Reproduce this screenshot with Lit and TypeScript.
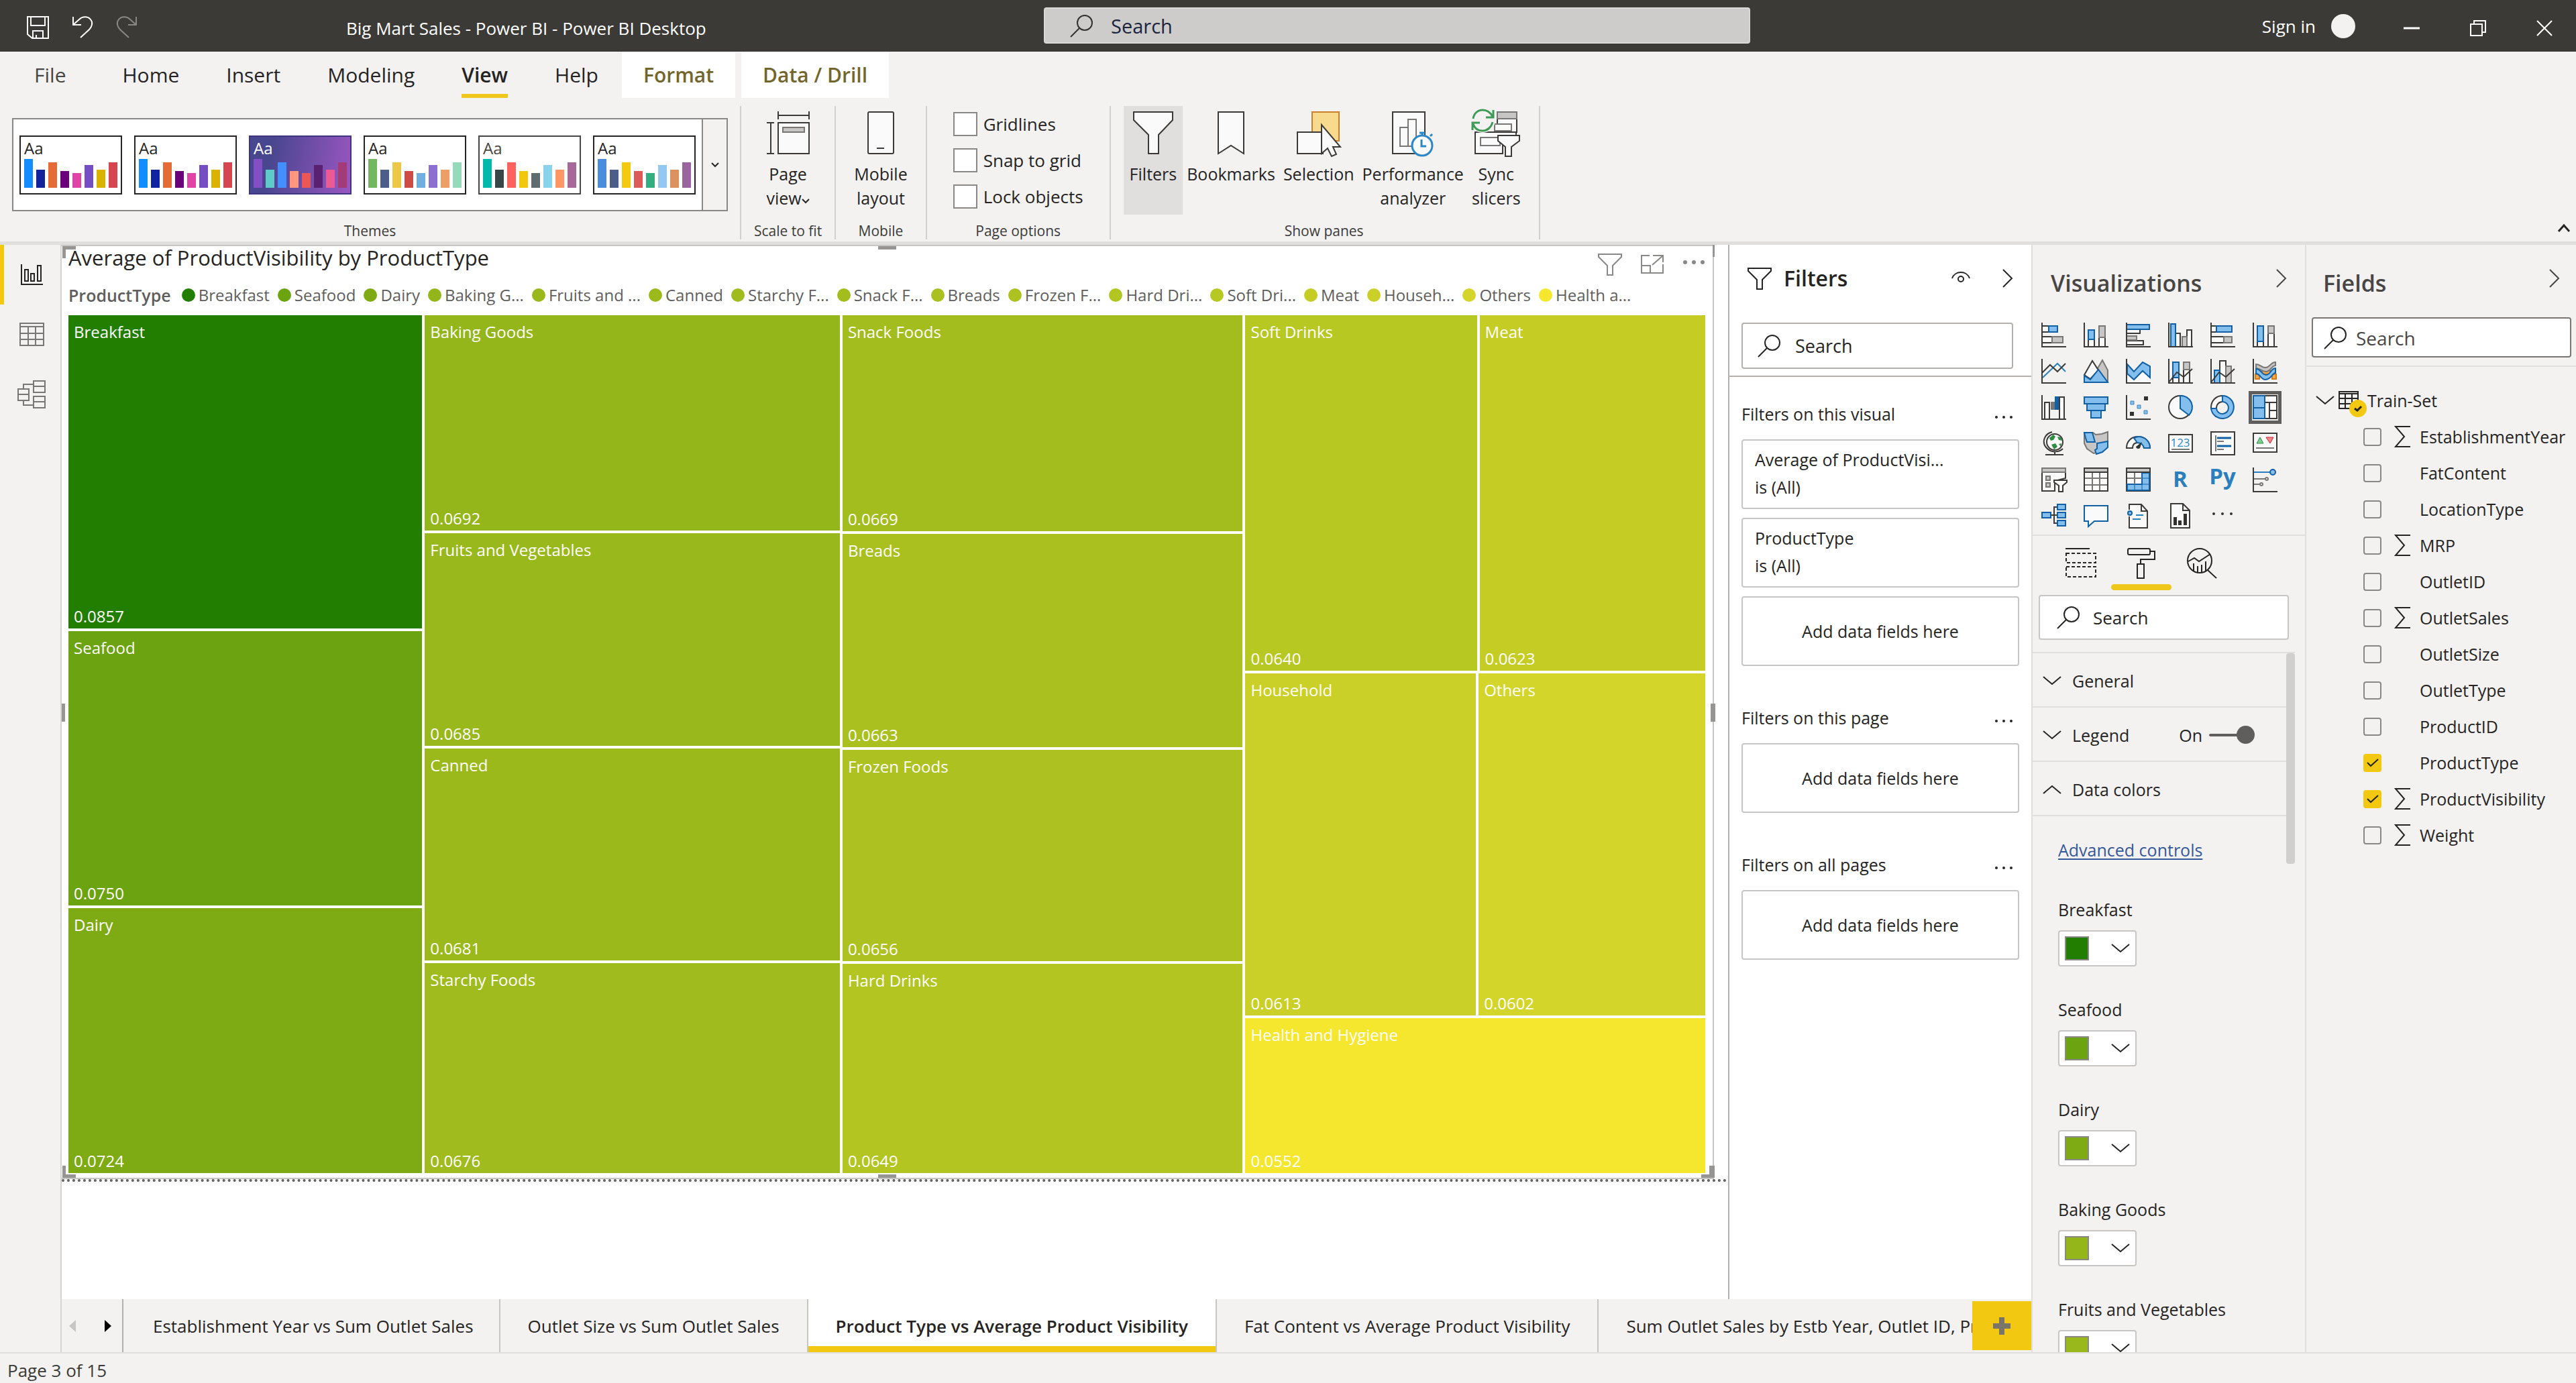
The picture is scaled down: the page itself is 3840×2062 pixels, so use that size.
import { LitElement, html, css, svg, nothing } from "lit";
import { customElement, state } from "lit/decorators.js";
import { classMap } from "lit/directives/class-map.js";
import { styleMap } from "lit/directives/style-map.js";

interface Cell {
  name: string;
  short: string;
  value: number;
  color: string;
}

const cell = (name: string, short: string, value: number, color: string): Cell => ({ name, short, value, color });

/* Treemap data: columns -> rows -> cells; every extent is proportional to the sum of its values. */
const TREEMAP: Cell[][][] = [
  [
    [cell("Breakfast", "Breakfast", 0.0857, "#227e01")],
    [cell("Seafood", "Seafood", 0.075, "#6ca310")],
    [cell("Dairy", "Dairy", 0.0724, "#7eaa13")],
  ],
  [
    [cell("Baking Goods", "Baking G...", 0.0692, "#94b61a")],
    [cell("Fruits and Vegetables", "Fruits and ...", 0.0685, "#99b81b")],
    [cell("Canned", "Canned", 0.0681, "#9cb91c")],
    [cell("Starchy Foods", "Starchy F...", 0.0676, "#a0bb1d")],
  ],
  [
    [cell("Snack Foods", "Snack F...", 0.0669, "#a4bd1e")],
    [cell("Breads", "Breads", 0.0663, "#a9c01f")],
    [cell("Frozen Foods", "Frozen F...", 0.0656, "#adc220")],
    [cell("Hard Drinks", "Hard Dri...", 0.0649, "#b2c521")],
  ],
  [
    [cell("Soft Drinks", "Soft Dri...", 0.064, "#b8c823"), cell("Meat", "Meat", 0.0623, "#c5cd25")],
    [cell("Household", "Househ...", 0.0613, "#cbd028"), cell("Others", "Others", 0.0602, "#d3d52a")],
    [cell("Health and Hygiene", "Health a...", 0.0552, "#f5e62e")],
  ],
];
const CELLS = TREEMAP.flat(2);
const total = (cells: Cell[]) => cells.reduce((sum, c) => sum + c.value, 0);

const BAR_HEIGHTS = [43, 27, 38, 25, 22, 34, 27, 38];
const CLASSIC = ["#118dff", "#12239e", "#e66c37", "#6b007b", "#e044a7", "#744ec2", "#d9b300", "#d64550"];
const THEMES = [
  { name: "Default", tone: "", bars: CLASSIC },
  { name: "Current", tone: "", bars: CLASSIC },
  { name: "Innovate", tone: "dusk", bars: ["#8250c4", "#5ecbc8", "#438fff", "#ff977e", "#eb5757", "#5b2071", "#ec5a96", "#a43b76"] },
  { name: "Bloom", tone: "", bars: ["#74b761", "#4c5d8a", "#ecc846", "#cd4c46", "#71afe2", "#8d6fd1", "#ee9e64", "#95dabb"] },
  { name: "Tidal", tone: "soft", bars: ["#01b8aa", "#374649", "#fd625e", "#f2c80f", "#5f6b6d", "#8ad4eb", "#fe9666", "#a66999"] },
  { name: "Storm", tone: "", bars: ["#4a8ddc", "#4c5d8a", "#f3c911", "#dc5b57", "#33ae81", "#95c8f0", "#dd915f", "#9a64a0"] },
];

const FIELDS = [
  { name: "EstablishmentYear", sum: true, on: false },
  { name: "FatContent", sum: false, on: false },
  { name: "LocationType", sum: false, on: false },
  { name: "MRP", sum: true, on: false },
  { name: "OutletID", sum: false, on: false },
  { name: "OutletSales", sum: true, on: false },
  { name: "OutletSize", sum: false, on: false },
  { name: "OutletType", sum: false, on: false },
  { name: "ProductID", sum: false, on: false },
  { name: "ProductType", sum: false, on: true },
  { name: "ProductVisibility", sum: true, on: true },
  { name: "Weight", sum: true, on: false },
];

const PAGES = [
  "Establishment Year vs Sum Outlet Sales",
  "Outlet Size vs Sum Outlet Sales",
  "Product Type vs Average Product Visibility",
  "Fat Content vs Average Product Visibility",
  "Sum Outlet Sales by Estb Year, Outlet ID, Product Type",
];

const icon = (w: number, h: number, body: unknown, cls = "") =>
  html`<svg class="icon ${cls}" width=${w} height=${h} viewBox="0 0 ${w} ${h}" aria-hidden="true">${body}</svg>`;

const searchIcon = () => icon(34, 34, svg`<circle cx="22" cy="12" r="11"/><path d="M14 20L1 33"/>`, "line");
const chevronRight = () => icon(16, 28, svg`<path d="M1 1L14 14L1 27"/>`, "line");
const chevronDown = () => icon(28, 14, svg`<path d="M1 1L14 12L27 1"/>`, "line");
const chevronUp = () => icon(28, 14, svg`<path d="M1 13L14 2L27 13"/>`, "line");
const funnel = () => icon(36, 33, svg`<path d="M1 1H35V5L22 18V32H14V18L1 5Z"/>`, "line");
const sigma = () => icon(24, 32, svg`<path d="M23 1H1L14 16L1 31H23"/>`, "line");

const AXES = svg`<path class="n" d="M1 0V36H37"/>`;

const VISUALS: { name: string; body: unknown }[] = [
  { name: "Stacked bar chart", body: svg`<path class="w" d="M1 5H11V14H1ZM1 21H16V30H1Z"/><path class="b" d="M11 5H24V14H11Z"/><path class="g" d="M16 21H32V30H16Z"/>${AXES}` },
  { name: "Stacked column chart", body: svg`<path class="w" d="M7 25H16V36H7ZM23 22H32V36H23Z"/><path class="b" d="M7 11H16V25H7Z"/><path class="g" d="M23 5H32V22H23Z"/>${AXES}` },
  { name: "Clustered bar chart", body: svg`<path class="w" d="M1 10H21V16H1ZM1 27H26V33H1Z"/><path class="b" d="M1 3H35V10H1Z"/><path class="g" d="M1 20H16V26H1Z"/>${AXES}` },
  { name: "Clustered column chart", body: svg`<path class="w" d="M11 16H18V36H11ZM28 11H35V36H28Z"/><path class="b" d="M4 2H11V36H4Z"/><path class="g" d="M21 21H28V36H21Z"/>${AXES}` },
  { name: "100% stacked bar chart", body: svg`<path class="w" d="M1 5H9V14H1ZM1 21H20V30H1Z"/><path class="b" d="M9 5H32V14H9Z"/><path class="g" d="M20 21H32V30H20Z"/>${AXES}` },
  { name: "100% stacked column chart", body: svg`<path class="w" d="M7 28H16V36H7ZM23 16H32V36H23Z"/><path class="b" d="M7 5H16V28H7Z"/><path class="g" d="M23 5H32V16H23Z"/>${AXES}` },
  { name: "Line chart", body: svg`<path class="lb" d="M2 28L24 7L36 19"/><path class="n" d="M1 21L13 9L24 19L36 7"/>${AXES}` },
  { name: "Area chart", body: svg`<path class="g" d="M18 19L28 2L36 17V35H30Z"/><path class="w" d="M1 24L13 3L22 17L10 30Z"/><path class="b" d="M1 25L10 31L22 16L36 35H1Z"/>` },
  { name: "Stacked area chart", body: svg`<path class="wf" d="M2 22L12 31L25 18L36 28V35H2Z"/><path class="b" d="M2 8L12 19L25 5L36 11V28L25 18L12 31L2 22Z"/>${AXES}` },
  { name: "Line and stacked column chart", body: svg`<path class="w" d="M7 28H16V36H7ZM23 16H32V36H23Z"/><path class="b" d="M7 5H16V28H7Z"/><path class="g" d="M23 5H32V16H23Z"/><path class="n" d="M1 35L13 20L23 27L36 15"/>${AXES}` },
  { name: "Line and clustered column chart", body: svg`<path class="w" d="M14 3H23V36H14Z"/><path class="b" d="M6 17H14V36H6Z"/><path class="g" d="M23 11H31V36H23Z"/><path class="n" d="M1 35L13 20L23 27L36 15"/>${AXES}` },
  { name: "Ribbon chart", body: svg`<path class="of" d="M4 23H10V30H4ZM14 17H26V23H14ZM29 23H35V30H29Z"/><path class="g" d="M5 8C12 8 13 14 20 13C26 12 27 5 34 5V10C28 10 27 19 20 19C13 19 12 14 5 14Z"/><path class="b" d="M5 15C13 15 13 24 20 24C27 24 27 14 34 14V21C29 21 28 31 19 31C12 31 12 23 5 22Z"/>${AXES}` },
  { name: "Waterfall chart", body: svg`<path class="gd" d="M14 10H20V22H14Z"/><path class="w" d="M5 11H12V36H5ZM27 3H34V36H27Z"/><path class="sf" d="M20 2H26V22H20Z"/>${AXES}` },
  { name: "Funnel chart", body: svg`<path class="b" d="M1 3H36V13H1ZM5 13H32V23H5ZM11 23H26V34H11Z"/>` },
  { name: "Scatter chart", body: svg`<path class="df" d="M27 2H33V8H27ZM6 25H12V31H6Z"/><path class="bt" d="M7 9H12V14H7ZM17 15H22V20H17ZM27 23H32V28H27Z"/>${AXES}` },
  { name: "Pie chart", body: svg`<circle class="w" cx="18" cy="18" r="17"/><path class="b" d="M18 1A17 17 0 0 1 31 30L18 20Z"/>` },
  { name: "Donut chart", body: svg`<path class="w" d="M18 1A17 17 0 0 0 1 18V20H9A9 9 0 0 1 18 10Z"/><path class="b" d="M18 1A17 17 0 1 1 1 20H9A9 9 0 1 0 18 10Z"/>` },
  { name: "Treemap", body: svg`<path class="w" d="M18 1H36V35H18ZM18 11H36M25 11V35M25 23H36"/><path class="b" d="M1 1H18V19H1ZM1 19H18V35H1Z"/>` },
  { name: "Map", body: svg`<circle class="w" cx="20" cy="16" r="12"/><path class="gr" d="M12 10L18 5L21 8L18 13L14 14ZM24 8L29 9L31 14L26 13ZM15 20L21 18L24 23L19 27ZM26 19L30 18L29 23Z"/><path class="n" d="M16 1C4 4 0 17 8 25C15 33 27 31 32 26M20 31V35M6 35H33"/>` },
  { name: "Filled map", body: svg`<path class="g" d="M1 2H14L18 5L27 4L36 1V20L30 24L25 30L15 33L5 26L1 18Z"/><path class="b" d="M1 2H13L17 16H5L3 10Z"/><path class="b" d="M20 18L36 15V24L28 31L19 34L17 28L20 26Z"/>` },
  { name: "Gauge", body: svg`<path class="w" d="M1 25C1 15 8 8 18 8C28 8 36 15 36 25H27C27 20 23 17 18 17C13 17 10 20 10 25Z"/><path class="b" d="M12 10C24 4 36 13 36 25H27C26 20 22 17 17 17Z"/><path class="df" d="M15 23L24 16L21 25C19 27 15 26 15 23Z"/>` },
  { name: "Card", body: svg`<path class="w" d="M1 5H36V31H1Z"/><text class="num" x="18" y="23">123</text><path class="lg" d="M5 27H32"/>` },
  { name: "Multi-row card", body: svg`<path class="w" d="M1 1H36V35H1Z"/><path class="lg" d="M8 6V30M10 15H20M10 27H20"/><path class="lB" d="M10 10H31M10 22H31"/>` },
  { name: "KPI", body: svg`<path class="w" d="M1 3H36V31H1Z"/><path class="up" d="M11 9L16 18H6Z"/><path class="dn" d="M20 9H31L26 18Z"/><path class="lg" d="M5 25H32"/>` },
  { name: "Slicer", body: svg`<path class="w" d="M1 1H36V16L20 20V35H1Z"/><path class="g" d="M1 1H36V7H1Z"/><path class="g" d="M7 13H13V19H7ZM7 23H13V29H7Z"/><path class="w" d="M19 19H38V22L32 27V36H26V27L19 22Z"/>` },
  { name: "Table", body: svg`<path class="w" d="M1 1H36V35H1Z"/><path class="lg" d="M2 16H35M2 26H35M13 8V34M24 8V34"/><path class="gk" d="M1 1H36V7H1Z"/>` },
  { name: "Matrix", body: svg`<path class="w" d="M1 1H36V35H1Z"/><path class="b" d="M24 8H35V34H2V25H24Z"/><path class="lg" d="M2 16H24M13 8V25"/><path class="lbs" d="M24 16H35M24 25V34M13 25V34M24 25H35"/><path class="gk" d="M1 1H36V7H1Z"/>` },
  { name: "R script visual", body: svg`<text class="letters" x="18" y="29">R</text>` },
  { name: "Python visual", body: svg`<text class="letters" x="18" y="25">Py</text>` },
  { name: "Key influencers", body: svg`<path class="lb" d="M1 7H26"/><circle class="b" cx="30" cy="7" r="4"/><path class="lg" d="M1 17H19M1 25H11"/><circle class="gc" cx="21" cy="17" r="2"/><circle class="gc" cx="13" cy="25" r="2"/>${AXES}` },
  { name: "Decomposition tree", body: svg`<path class="n" d="M14 17H24M24 5H19V29H24"/><path class="b" d="M1 13H14V21H1ZM24 1H36V9H24ZM24 13H36V21H24ZM24 25H36V33H24Z"/>` },
  { name: "Q and A", body: svg`<path class="bw" d="M1 3H36V26H16L7 34V26H1Z"/>` },
  { name: "Smart narrative", body: svg`<path class="wf" d="M5 1H23L32 11V36H5Z"/><path class="n" d="M5 9V1H23L32 11V36H5V19M23 1V11H32"/><circle class="b" cx="6" cy="14" r="3"/><path class="lb" d="M15 17H26M10 23H22"/>` },
  { name: "Paginated report", body: svg`<path class="w" d="M4 0H22L32 10V36H4ZM22 0V10H32"/><path class="df" d="M8 20H13V32H8ZM15 25H20V32H15ZM23 15H28V32H23Z"/>` },
  { name: "More visuals", body: svg`<circle class="df" cx="5" cy="15" r="2"/><circle class="df" cx="18" cy="15" r="2"/><circle class="df" cx="31" cy="15" r="2"/>` },
];

@customElement("app-root")
export class AppRoot extends LitElement {
  @state() private page = 2;
  @state() private visual = 17;

  static styles = css`
    :host {
      --ink: #252423;
      --soft: #605e5c;
      --bar: #3b3a37;
      --surface: #f3f2f1;
      --edge: #e1dfdd;
      --line: #c8c6c4;
      --accent: #f2c811;
      display: grid;
      grid-template-rows: 77px auto minmax(0, 1fr) 46px;
      height: 100vh;
      overflow: hidden;
      background: var(--surface);
      color: var(--ink);
      font: 25px/34px "Open Sans", "Noto Sans", sans-serif;
    }
    *, *::before, *::after { box-sizing: border-box; }
    button, input { font: inherit; color: inherit; }
    button {
      margin: 0;
      padding: 0;
      border: 0;
      background: none;
      display: flex;
      align-items: center;
      justify-content: center;
      flex: none;
    }
    h2, h3, p, ul { margin: 0; padding: 0; font-weight: inherit; font-size: inherit; }
    ul { list-style: none; }
    .icon { display: block; flex: none; overflow: visible; }
    .line { fill: none; stroke: currentColor; stroke-width: 2; }

    /* Title bar */
    .titlebar {
      display: grid;
      grid-template-columns: 1556fr 1053fr 1231fr;
      background: var(--bar);
      color: #fff;
      font-size: 26px;
    }
    .quick { display: flex; align-items: center; padding: 4px 0 0 40px; gap: 34px; }
    .quick .dim { color: #8a8886; }
    .doc { margin-left: 277px; padding-top: 2px; white-space: nowrap; }
    .search {
      display: flex;
      align-items: center;
      border: 2px solid var(--line);
      border-radius: 4px;
      background: #fff;
      gap: 22px;
    }
    .search input {
      flex: 1;
      min-width: 0;
      padding: 0;
      border: 0;
      outline: 0;
      background: none;
      font-size: 27px;
      line-height: 40px;
    }
    .search input::placeholder { color: inherit; opacity: 1; }
    .search.top {
      margin: 11px 0 12px;
      padding: 2px 0 0 37px;
      gap: 27px;
      background: #cdccca;
      border-color: #dad8d6;
      color: #1b2440;
    }
    .search.top .icon { color: #33322f; }
    .search.top input { font-size: 29px; }
    .window { display: flex; align-items: center; justify-content: flex-end; padding-right: 35px; }
    .window .avatar { width: 36px; height: 36px; margin: 0 72px 0 23px; border-radius: 50%; background: var(--surface); }
    .window button + button { margin-left: 75px; }
    .window button .icon { margin-top: 6px; }

    /* Ribbon */
    .ribbon { border-bottom: 5px solid #e0dfde; }
    .tabs { display: flex; height: 69px; padding-left: 16px; font-size: 30px; }
    .tab { padding: 0 35px; position: relative; }
    .tab.file { color: #484644; margin-right: 14px; }
    .tab.on { font-weight: 600; }
    .tab.on::after {
      content: "";
      position: absolute;
      left: 35px;
      right: 35px;
      bottom: 0;
      height: 6px;
      background: #efc71b;
    }
    .tab.context { background: #fff; color: #73662c; font-weight: 600; padding: 0 32px; }
    .tab.context + .tab.context { margin-left: 9px; }
    .groups { display: flex; padding: 12px 0 3px; height: 214px; }
    .group {
      display: flex;
      flex-direction: column;
      justify-content: space-between;
      align-items: center;
      border-right: 2px solid #d2d0ce;
    }
    .group > .label { font-size: 21px; line-height: 26px; color: #3b3a39; }
    .themes { padding: 0 18px; }
    .scale { padding: 0 19px; }
    .mobile { padding: 0 21px; }
    .options { padding: 0 39px; }
    .show { padding: 0 21px 0 19px; }
    .gallery {
      display: flex;
      margin-top: 18px;
      height: 139px;
      border: 2px solid #8a8886;
      background: #fff;
    }
    .thumbs { display: flex; align-items: center; gap: 18px; padding: 0 9px; }
    .thumb {
      flex-direction: column;
      align-items: flex-start;
      justify-content: space-between;
      width: 153px;
      height: 88px;
      padding: 4px 6px 8px 5px;
      border: 2px solid #252423;
      background: #fff;
      font-size: 24px;
      line-height: 26px;
    }
    .thumb.soft { border-color: #484644; color: #484644; }
    .thumb.dusk { border-color: #3d3580; color: #fff; background: linear-gradient(100deg, #48468f 20%, #9a56c1); }
    .bars { display: flex; align-items: flex-end; gap: 5px; height: 43px; }
    .bars i { width: 13px; }
    .more { width: 37px; border-left: 2px solid #8a8886; background: var(--surface); }
    .big {
      flex-direction: column;
      justify-content: flex-start;
      height: 162px;
      padding: 8px 6px 0;
      line-height: 36px;
    }
    .big .cap { margin-top: 11px; }
    .big.pressed { background: var(--edge); padding: 8px 9px 0; }
    .row { display: flex; }
    .icon.tiny { display: inline-block; }
    .rb .w { fill: #fafafa; stroke: #3b3a39; stroke-width: 2; }
    .rb .n { fill: none; stroke: #3b3a39; stroke-width: 2; }
    .rb .g { fill: #c8c6c4; stroke: #797775; stroke-width: 2; }
    .rb .gw { fill: #fafafa; stroke: #797775; stroke-width: 2; }
    .rb .o { fill: #f8da8f; stroke: #c8802b; stroke-width: 2; }
    .rb .bl { fill: #fafafa; stroke: #2b88c8; stroke-width: 3; }
    .rb .gn { fill: none; stroke: #3f9a57; stroke-width: 3; }
    .checks { display: flex; flex-direction: column; gap: 18px; padding-top: 9px; font-size: 26px; }
    .checks label { display: flex; align-items: center; gap: 9px; height: 36px; }
    .checks input { appearance: none; margin: 0; width: 36px; height: 36px; border: 2px solid #8a8886; background: #fff; }
    .collapse { margin: auto 8px 11px auto; }
    .bold { stroke-width: 3; }

    /* Workspace */
    .workspace { display: grid; grid-template-columns: 92px minmax(0, 1fr) 408px 404px; min-height: 0; }
    .rail { border-right: 2px solid #d6d4d2; color: #797775; }
    .rail button { width: 90px; height: 89px; padding-left: 2px; border-left: 6px solid transparent; padding-right: 4px; }
    .rail button.on { border-color: var(--accent); color: var(--ink); }
    .main { display: grid; grid-template-rows: minmax(0, 1fr) 79px; min-height: 0; }
    .stage { display: grid; grid-template-columns: minmax(0, 1fr) 452px; background: #fff; min-height: 0; }
    .page { aspect-ratio: 16 / 9; border-bottom: 4px dotted #605e5c; display: flex; }
    .visual {
      position: relative;
      display: flex;
      flex-direction: column;
      flex: 1;
      min-width: 0;
      margin-right: 21px;
      padding: 0 11px 7px 10px;
      border: 2px solid var(--line);
      border-left: 0;
    }
    .visual-top { display: flex; justify-content: space-between; height: 54px; }
    .visual h2 { font-size: 31px; line-height: 34px; }
    .tools { display: flex; align-items: center; gap: 28px; color: #8a8886; }
    .tools .dots { fill: currentColor; }
    .legend { display: flex; align-items: center; gap: 16px; height: 38px; margin-bottom: 11px; font-size: 24px; color: var(--soft); white-space: nowrap; }
    .legend b { font-size: 25px; font-weight: 600; }
    .legend li { display: flex; align-items: center; gap: 5px; }
    .legend ul { display: flex; gap: 12px; }
    .dot { width: 20px; height: 20px; border-radius: 50%; }
    .treemap { display: flex; flex: 1; gap: 4px; min-height: 0; color: #fff; font-size: 24px; line-height: 32px; }
    .treemap .col { display: flex; flex-direction: column; gap: 4px; flex-basis: 0; min-width: 0; }
    .treemap .band { display: flex; gap: 4px; flex-basis: 0; min-height: 0; }
    .treemap .cell { display: flex; flex-direction: column; justify-content: space-between; flex-basis: 0; min-width: 0; padding: 9px 8px 2px; }
    .grip { position: absolute; background: #979593; }
    .grip.t { top: 0; left: calc(50% - 14px); width: 27px; height: 5px; }
    .grip.b { bottom: 0; left: calc(50% - 14px); width: 27px; height: 5px; }
    .grip.l { left: 0; top: calc(50% - 13px); width: 5px; height: 27px; }
    .grip.r { right: -4px; top: calc(50% - 13px); width: 7px; height: 27px; }
    .corner { position: absolute; width: 20px; height: 18px; border: 0 solid #979593; }
    .corner.tl { left: 1px; top: 0; border-width: 5px 0 0 5px; }
    .corner.tr { right: -3px; top: -2px; border-width: 0 3px 0 0; }
    .corner.bl { left: 1px; bottom: 0; border-width: 0 0 5px 5px; }
    .corner.br { right: -3px; bottom: 0; border-width: 0 8px 5px 0; }

    /* Filters pane */
    .filters { border-left: 2px solid #b3b0ad; padding-top: 25px; background: #fff; min-width: 0; }
    .pane-head { display: flex; align-items: center; height: 50px; font-size: 34px; font-weight: 600; }
    .filters .pane-head { padding: 0 27px 0 27px; }
    .filters .pane-head h2 { margin-left: 18px; margin-right: auto; font-size: 32px; }
    .filters .pane-head .eye { margin-right: 48px; }
    .filters .search { margin: 41px 27px 10px 18px; height: 69px; padding-left: 22px; border-color: #b3b0ad; }
    .filter-body { border-top: 2px solid #b3b0ad; padding: 38px 18px 0; }
    .filter-section { display: flex; flex-direction: column; gap: 13px; margin-bottom: 60px; }
    .filter-section h3 { display: flex; justify-content: space-between; align-items: center; margin-bottom: 8px; }
    .filter-section h3 button { padding: 10px 10px 0 0; }
    .card {
      height: 104px;
      padding: 8px 18px;
      border: 2px solid var(--line);
      border-radius: 4px;
      line-height: 41px;
    }
    .card.drop { display: flex; align-items: center; justify-content: center; }

    /* Page tabs */
    .pages { display: flex; min-width: 0; background: var(--surface); font-size: 26px; }
    .pager { display: flex; align-items: center; gap: 41px; padding: 0 15px 0 10px; border-right: 2px solid #b3b0ad; }
    .pager .off { fill: #c8c6c4; }
    .page-tabs { display: flex; flex: 1; min-width: 0; overflow: hidden; }
    .page-tab { padding: 0 41px; border-right: 2px solid var(--line); white-space: nowrap; }
    .page-tab:first-child { padding: 0 38px 0 44px; }
    .page-tab.on { background: #fff; font-weight: 600; box-shadow: inset 0 -9px var(--accent); }
    .add { width: 88px; margin: 3px 0; background: var(--accent); }
    .add path { fill: #7a7566; }

    /* Visualizations pane */
    .viz, .fields { border-left: 2px solid var(--edge); padding-top: 32px; min-width: 0; min-height: 0; color: #252423; }
    .viz { display: flex; flex-direction: column; position: relative; }
    .viz .pane-head, .fields .pane-head { justify-content: space-between; align-items: flex-start; color: #484644; padding: 0 27px 0 27px; line-height: 50px; }
    .fields .pane-head { padding: 0 24px 0 25px; }
    .viz .pane-head button, .fields .pane-head button { margin-top: 4px; }
    .visuals { display: grid; grid-template-columns: repeat(6, 37px); gap: 17px 26px; padding: 34px 0 9px 13px; border-bottom: 2px solid var(--edge); }
    .visuals button { width: 37px; height: 37px; }
    .visuals button.on { outline: 5px solid #605e5c; outline-offset: 1px; }
    .visuals .w { fill: #fafafa; stroke: #3b3a39; stroke-width: 2; }
    .visuals .wf { fill: #fafafa; }
    .visuals .n { fill: none; stroke: #3b3a39; stroke-width: 2; }
    .visuals .b { fill: #83beec; stroke: #1160a5; stroke-width: 2; }
    .visuals .bt { fill: #83beec; stroke: #3a86c4; }
    .visuals .bw { fill: #fafafa; stroke: #1160a5; stroke-width: 2; }
    .visuals .g { fill: #c8c6c4; stroke: #797775; stroke-width: 2; }
    .visuals .gk { fill: #c8c6c4; stroke: #3b3a39; stroke-width: 2; }
    .visuals .gd { fill: #797775; }
    .visuals .gc { fill: #fafafa; stroke: #797775; stroke-width: 2; }
    .visuals .df { fill: #33322f; }
    .visuals .sf { fill: #1160a5; }
    .visuals .of { fill: #f3a64c; stroke: #d67a16; stroke-width: 2; }
    .visuals .gr { fill: #2a8f43; }
    .visuals .lb { fill: none; stroke: #2b7fbd; stroke-width: 2; }
    .visuals .lbs { fill: none; stroke: #1160a5; stroke-width: 1; }
    .visuals .lB { fill: none; stroke: #1160a5; stroke-width: 3; }
    .visuals .lg { fill: none; stroke: #797775; stroke-width: 2; }
    .visuals .up { fill: #7fcf92; stroke: #2a8f43; stroke-width: 1; }
    .visuals .dn { fill: #f7868a; stroke: #c4262e; stroke-width: 1; }
    .visuals .num { fill: #2b88c8; font-size: 17px; text-anchor: middle; }
    .visuals .letters { fill: #2b7fbd; font-size: 33px; font-weight: 700; text-anchor: middle; }
    .modes { display: flex; padding: 18px 0 0 27px; }
    .modes button { width: 90px; height: 63px; align-items: flex-start; border-radius: 4px; position: relative; }
    .modes button.on::after { content: ""; position: absolute; inset: auto 0 0; height: 9px; border-radius: 5px; background: #efc71b; }
    .viz .search { flex: none; margin: 7px 24px 18px 9px; height: 67px; padding-left: 25px; gap: 20px; }
    .viz .search input { font-size: 26px; }
    .format { flex: 1; min-height: 0; margin-right: 15px; overflow: hidden; position: relative; }
    .format .section { display: flex; align-items: center; height: 81px; border-top: 2px solid var(--edge); padding: 2px 60px 0 15px; }
    .format .section button { gap: 16px; }
    .switch { display: flex; align-items: center; gap: 10px; margin-left: auto; }
    .switch input { appearance: none; position: relative; margin: 0; width: 68px; height: 27px; }
    .switch input::before { content: ""; position: absolute; left: 0; right: 20px; top: 12px; height: 4px; background: var(--soft); border-radius: 2px; }
    .switch input::after { content: ""; position: absolute; right: 0; top: 0; width: 27px; height: 27px; border-radius: 50%; background: var(--soft); }
    .colors { border-top: 2px solid var(--edge); padding: 33px 0 0 38px; }
    .colors a { color: #35589a; text-underline-offset: 3px; text-decoration-thickness: 2px; }
    .color-list { margin-top: 55px; display: flex; flex-direction: column; gap: 47px; }
    .color-list li { display: flex; flex-direction: column; gap: 14px; }
    .swatch { width: 117px; height: 54px; padding: 0 8px; justify-content: space-between; align-items: center; background: #fff; border: 2px solid var(--line); border-radius: 4px; }
    .swatch i { width: 36px; height: 36px; border: 2px solid #8a8886; }
    .thumb-bar { position: absolute; right: 0; top: 2px; width: 13px; height: 314px; border-radius: 4px; background: #d0cfcd; }

    /* Fields pane */
    .fields .search { margin: 26px 7px 12px 8px; height: 60px; padding: 2px 0 0 16px; gap: 14px; border-color: #797775; color: #484644; }
    .fields .search input { font-size: 28px; }
    .fields .search .icon { color: var(--ink); }
    .tree { border-top: 2px solid var(--edge); padding-top: 23px; }
    .table-row { display: flex; align-items: center; height: 54px; padding-left: 14px; width: 100%; justify-content: flex-start; }
    .table-row .icon.tbl { margin: 0 0 0 5px; }
    .table-row span { margin-left: 1px; }
    .field { display: flex; align-items: center; height: 54px; padding-left: 85px; }
    .box { display: grid; }
    .box > * { grid-area: 1 / 1; }
    .box input { appearance: none; margin: 0; width: 27px; height: 27px; border: 2px solid #8a8886; border-radius: 4px; }
    .box input:checked { border-color: var(--accent); background: var(--accent); }
    .box .icon { pointer-events: none; place-self: center; }
    .sum { width: 24px; margin: 0 13px 0 20px; }

    .status { display: flex; align-items: center; padding: 6px 0 0 11px; border-top: 2px solid var(--edge); color: #3b3a39; font-size: 26px; }
  `;

  private titleBar() {
    return html`
      <header class="titlebar">
        <div class="quick">
          <button aria-label="Save">${icon(33, 34, svg`<path d="M1 1H32V33H8L1 27V1ZM6 1V14H27V1M9 33V22H24V33M14 33V28"/>`, "line")}</button>
          <button aria-label="Undo">${icon(32, 33, svg`<path d="M2 1V13H14M2 13L11 5C16 0 24 0 28 5C32 10 30 16 26 20L13 32"/>`, "line")}</button>
          <button class="dim" aria-label="Redo">${icon(32, 33, svg`<path d="M30 1V13H18M30 13L21 5C16 0 8 0 4 5C0 10 2 16 6 20L19 32"/>`, "line")}</button>
          <span class="doc">Big Mart Sales - Power BI - Power BI Desktop</span>
        </div>
        <label class="search top">${searchIcon()}<input type="text" placeholder="Search" aria-label="Search" /></label>
        <div class="window">
          <button>Sign in</button>
          <span class="avatar"></span>
          <button aria-label="Minimize">${icon(24, 24, svg`<path d="M0 12H24"/>`, "line bold")}</button>
          <button aria-label="Restore">${icon(24, 24, svg`<path d="M1 6H18V23H1ZM6 6V1H23V18H18"/>`, "line")}</button>
          <button aria-label="Close">${icon(24, 24, svg`<path d="M1 1L23 23M23 1L1 23"/>`, "line")}</button>
        </div>
      </header>`;
  }

  private ribbon() {
    return html`
      <section class="ribbon">
        <nav class="tabs">
          <button class="tab file">File</button>
          <button class="tab">Home</button>
          <button class="tab">Insert</button>
          <button class="tab">Modeling</button>
          <button class="tab on">View</button>
          <button class="tab">Help</button>
          <button class="tab context">Format</button>
          <button class="tab context">Data / Drill</button>
        </nav>
        <div class="groups">
          <div class="group themes">
            <div class="gallery">
              <div class="thumbs">
                ${THEMES.map(
                  (t) => html`<button class="thumb ${t.tone}" aria-label="${t.name} theme">
                    <span>Aa</span>
                    <span class="bars">${t.bars.map((c, i) => html`<i style=${styleMap({ background: c, height: `${BAR_HEIGHTS[i]}px` })}></i>`)}</span>
                  </button>`,
                )}
              </div>
              <button class="more" aria-label="More themes">${icon(12, 8, svg`<path d="M1 1L6 6L11 1"/>`, "line")}</button>
            </div>
            <span class="label">Themes</span>
          </div>
          <div class="group scale">
            <button class="big">
              ${icon(64, 64, svg`<path class="n" d="M17 0V12M63 0V12M17 6H63M0 17H11M0 63H11M6 17V63"/><path class="w" d="M17 17H63V63H17Z"/><path class="g" d="M24 24H56V31H24Z"/>`, "rb")}
              <span class="cap">Page<br />view${icon(12, 10, svg`<path d="M1 2L6 7L11 2"/>`, "line tiny")}</span>
            </button>
            <span class="label">Scale to fit</span>
          </div>
          <div class="group mobile">
            <button class="big">
              ${icon(40, 64, svg`<rect class="w" x="1" y="1" width="38" height="62" rx="2"/><path class="n" d="M14 55H25"/>`, "rb")}
              <span class="cap">Mobile<br />layout</span>
            </button>
            <span class="label">Mobile</span>
          </div>
          <div class="group options">
            <div class="checks">
              <label><input type="checkbox" />Gridlines</label>
              <label><input type="checkbox" />Snap to grid</label>
              <label><input type="checkbox" />Lock objects</label>
            </div>
            <span class="label">Page options</span>
          </div>
          <div class="group show">
            <div class="row">
              <button class="big pressed">
                ${icon(60, 64, svg`<path class="w" d="M1 1H59V13L38 35V63H23V35L1 13Z"/>`, "rb")}
                <span class="cap">Filters</span>
              </button>
              <button class="big">
                ${icon(40, 64, svg`<path class="w" d="M1 1H39V63L20 51L1 63Z"/>`, "rb")}
                <span class="cap">Bookmarks</span>
              </button>
              <button class="big">
                ${icon(66, 64, svg`<path class="o" d="M23 1H63V44H23Z"/><path class="w" d="M1 31H39V63H1Z"/><path class="w" d="M37 20V63L46 55L52 67L59 64L54 53H65Z"/>`, "rb")}
                <span class="cap">Selection</span>
              </button>
              <button class="big">
                ${icon(62, 64, svg`<path class="w" d="M1 1H49V63H1Z"/><path class="gw" d="M12 24H24V52H12ZM24 12H36V52H24Z"/><circle class="bl" cx="45" cy="51" r="15"/><path class="bl" d="M45 36V32M41 32H49M57 37L60 34M44 42V52H51"/>`, "rb")}
                <span class="cap">Performance<br />analyzer</span>
              </button>
              <button class="big">
                ${icon(
                  72,
                  64,
                  svg`<path class="w" d="M38 1H67V31H38Z"/><path class="g" d="M38 1H67V11H38Z"/><path class="gw" d="M34 19H59V29H34Z"/><path class="w" d="M5 31H66V36H46V63H5Z"/><path class="gw" d="M13 39H42V51H13Z"/><path class="w" d="M39 36H71V44L59 53V67H50V53L39 44Z"/><circle cx="16" cy="13" r="19" fill="#f3f2f1"/><path class="gn" d="M2 11C3 3 9 -2 16 -2C23 -2 28 2 31 8M32 -2V9H21M31 16C29 24 23 29 16 29C9 29 4 25 2 19M1 28V17H12"/>`,
                  "rb",
                )}
                <span class="cap">Sync<br />slicers</span>
              </button>
            </div>
            <span class="label">Show panes</span>
          </div>
          <button class="collapse" aria-label="Collapse ribbon">${icon(20, 12, svg`<path d="M2 11L10 2L18 11"/>`, "line bold")}</button>
        </div>
      </section>`;
  }

  private chart() {
    return html`
      <div class="page">
        <article class="visual">
          <div class="visual-top">
            <h2>Average of ProductVisibility by ProductType</h2>
            <div class="tools">
              <button aria-label="Filters on visual">${funnel()}</button>
              <button aria-label="Focus mode">${icon(34, 28, svg`<path d="M13 1H1V27H33V14M1 16H14V27M18 1H33V11M33 1L17 15"/>`, "line")}</button>
              <button aria-label="More options">${icon(34, 8, svg`<circle cx="4" cy="1" r="3"/><circle cx="17" cy="1" r="3"/><circle cx="30" cy="1" r="3"/>`, "dots")}</button>
            </div>
          </div>
          <div class="legend">
            <b>ProductType</b>
            <ul>
              ${CELLS.map((c) => html`<li><i class="dot" style=${styleMap({ background: c.color })}></i>${c.short}</li>`)}
            </ul>
          </div>
          <div class="treemap">
            ${TREEMAP.map(
              (col) => html`<div class="col" style=${styleMap({ flexGrow: String(total(col.flat()) * 1000) })}>
                ${col.map(
                  (band) => html`<div class="band" style=${styleMap({ flexGrow: String(total(band) * 1000) })}>
                    ${band.map(
                      (c) => html`<div class="cell" style=${styleMap({ flexGrow: String(c.value * 1000), background: c.color })}>
                        <span>${c.name}</span><span>${c.value.toFixed(4)}</span>
                      </div>`,
                    )}
                  </div>`,
                )}
              </div>`,
            )}
          </div>
          <i class="grip t"></i><i class="grip b"></i><i class="grip l"></i><i class="grip r"></i>
          <i class="corner tl"></i><i class="corner tr"></i><i class="corner bl"></i><i class="corner br"></i>
        </article>
      </div>`;
  }

  private filterSection(title: string, cards: string[]) {
    return html`<section class="filter-section">
      <h3>${title}<button aria-label="More options">${icon(26, 6, svg`<circle cx="2" cy="3" r="2" fill="#252423"/><circle cx="13" cy="3" r="2" fill="#252423"/><circle cx="24" cy="3" r="2" fill="#252423"/>`)}</button></h3>
      ${cards.map((c) => html`<div class="card"><p>${c}</p><p>is (All)</p></div>`)}
      <div class="card drop">Add data fields here</div>
    </section>`;
  }

  private filtersPane() {
    return html`
      <aside class="filters">
        <div class="pane-head">
          ${funnel()}
          <h2>Filters</h2>
          <button class="eye" aria-label="Show filters">${icon(28, 20, svg`<path d="M1 10C5 -2 23 -2 27 10"/><circle cx="14" cy="11" r="4"/>`, "line")}</button>
          <button aria-label="Collapse filters">${chevronRight()}</button>
        </div>
        <label class="search">${searchIcon()}<input type="text" placeholder="Search" aria-label="Search filters" /></label>
        <div class="filter-body">
          ${this.filterSection("Filters on this visual", ["Average of ProductVisi...", "ProductType"])}
          ${this.filterSection("Filters on this page", [])}
          ${this.filterSection("Filters on all pages", [])}
        </div>
      </aside>`;
  }

  private vizPane() {
    return html`
      <aside class="viz">
        <div class="pane-head"><h2>Visualizations</h2><button aria-label="Collapse visualizations">${chevronRight()}</button></div>
        <div class="visuals">
          ${VISUALS.map(
            (v, i) => html`<button class=${classMap({ on: i === this.visual })} aria-label=${v.name} @click=${() => (this.visual = i)}>
              ${icon(37, 37, v.body)}
            </button>`,
          )}
        </div>
        <div class="modes">
          <button aria-label="Fields">${icon(46, 45, svg`<path d="M0 1H36"/><path stroke-dasharray="5 3" d="M1 8H45V22H1ZM1 28H45V43H1Z"/>`, "line")}</button>
          <button class="on" aria-label="Format">${icon(42, 46, svg`<rect x="1" y="1" width="33" height="9" rx="2"/><path d="M34 5H41V17H20V24M15 24H25V45H15Z"/>`, "line")}</button>
          <button aria-label="Analytics">${icon(46, 46, svg`<circle cx="20" cy="19" r="18"/><path d="M3 20L12 15L19 20L36 9M11 23V34M17 27V37M23 25V37M29 20V34M32 33L45 45"/>`, "line")}</button>
        </div>
        <label class="search">${searchIcon()}<input type="text" placeholder="Search" aria-label="Search format options" /></label>
        <div class="format">
          <div class="section"><button>${chevronDown()}General</button></div>
          <div class="section">
            <button>${chevronDown()}Legend</button>
            <label class="switch">On<input type="checkbox" role="switch" checked /></label>
          </div>
          <div class="section"><button>${chevronUp()}Data colors</button></div>
          <div class="colors">
            <a href="#advanced">Advanced controls</a>
            <ul class="color-list">
              ${CELLS.slice(0, 5).map(
                (c) => html`<li>${c.name}<button class="swatch" aria-label="${c.name} color"><i style=${styleMap({ background: c.color })}></i>${chevronDown()}</button></li>`,
              )}
            </ul>
          </div>
          <i class="thumb-bar"></i>
        </div>
      </aside>`;
  }

  private fieldsPane() {
    return html`
      <aside class="fields">
        <div class="pane-head"><h2>Fields</h2><button aria-label="Collapse fields">${chevronRight()}</button></div>
        <label class="search">${searchIcon()}<input type="text" placeholder="Search" aria-label="Search fields" /></label>
        <div class="tree">
          <button class="table-row">
            ${chevronDown()}
            ${icon(43, 40, svg`<path class="line" d="M2 7H30V32H2ZM2 10H30M2 17H30M2 25H30M11 10V32M21 10V32"/><circle cx="30" cy="32" r="13" fill="#f2c811"/><path class="line bold" d="M25 32L29 35L35 29"/>`, "tbl")}
            <span>Train-Set</span>
          </button>
          ${FIELDS.map(
            (f) => html`<label class="field">
              <span class="box">
                <input type="checkbox" .checked=${f.on} />
                ${f.on ? icon(18, 12, svg`<path d="M1 6L6 11L17 1"/>`, "line") : nothing}
              </span>
              <span class="sum">${f.sum ? sigma() : nothing}</span>
              <span>${f.name}</span>
            </label>`,
          )}
        </div>
      </aside>`;
  }

  render() {
    return html`
      ${this.titleBar()} ${this.ribbon()}
      <div class="workspace">
        <nav class="rail">
          <button class="on" aria-label="Report">${icon(33, 32, svg`<path d="M1 0V30H33M6 8H11V25H6ZM15 14H20V25H15ZM25 2H30V25H25Z"/>`, "line")}</button>
          <button aria-label="Data">${icon(37, 36, svg`<path d="M1 1H36V34H1ZM1 6H36M1 16H36M1 25H36M13 6V34M24 6V34"/>`, "line")}</button>
          <button aria-label="Model">${icon(42, 42, svg`<path d="M24 1H41V18H24ZM24 9H41M1 13H17V30H1ZM1 21H17M24 24H41V41H24ZM24 32H41M9 13V6H24M9 30V37H24"/>`, "line")}</button>
        </nav>
        <main class="main">
          <div class="stage">${this.chart()} ${this.filtersPane()}</div>
          <div class="pages">
            <div class="pager">
              <button aria-label="Previous page">${icon(12, 18, svg`<path class="off" d="M11 0V18L1 9Z"/>`)}</button>
              <button aria-label="Next page">${icon(12, 18, svg`<path d="M1 0V18L11 9Z"/>`)}</button>
            </div>
            <div class="page-tabs">
              ${PAGES.map(
                (p, i) => html`<button class=${classMap({ "page-tab": true, on: i === this.page })} @click=${() => (this.page = i)}>${p}</button>`,
              )}
            </div>
            <button class="add" aria-label="New page">${icon(26, 26, svg`<path d="M9 0H17V9H26V17H17V26H9V17H0V9H9Z"/>`)}</button>
          </div>
        </main>
        ${this.vizPane()} ${this.fieldsPane()}
      </div>
      <footer class="status">Page 3 of 15</footer>`;
  }
}
